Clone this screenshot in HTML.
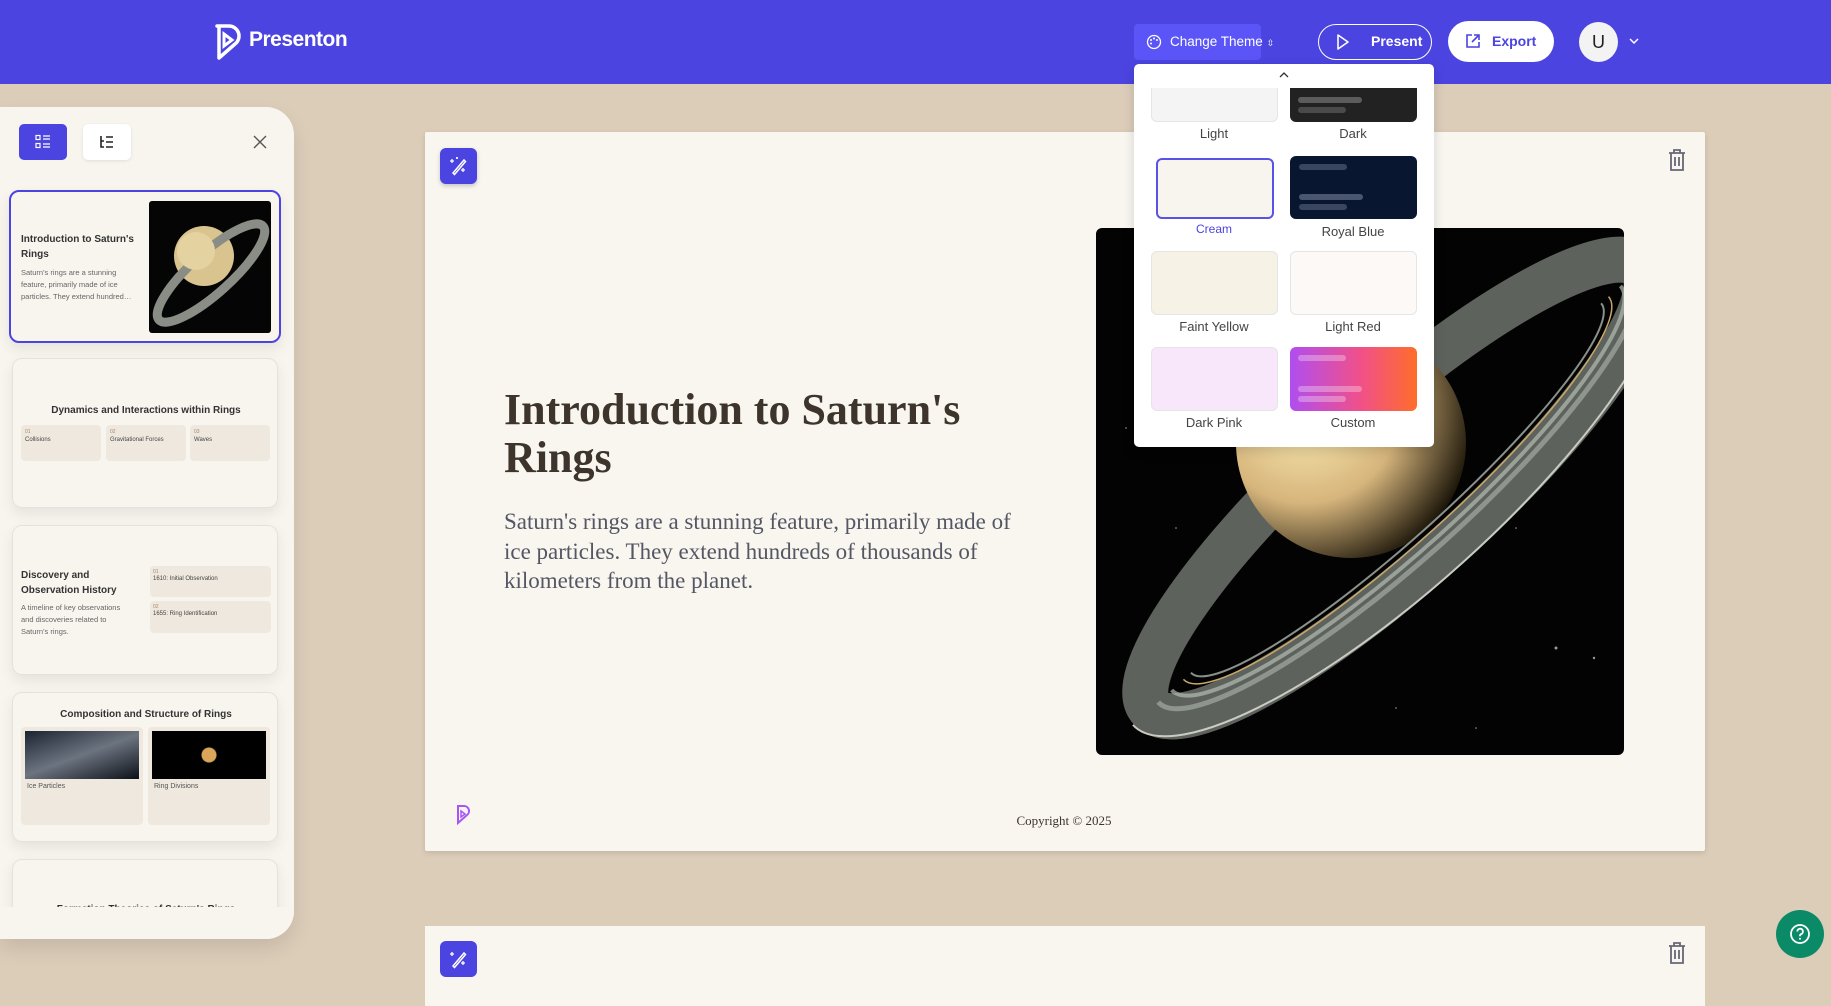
<!DOCTYPE html>
<html><head><meta charset="utf-8"><style>
*{box-sizing:border-box;margin:0;padding:0}
body{width:1831px;height:981px;overflow:hidden;background:#dccdb9;font-family:"Liberation Sans",sans-serif;position:relative}
.hdr{position:absolute;left:0;top:0;width:1831px;height:84px;background:#4b44e0}
.abs{position:absolute}
.serif{font-family:"Liberation Serif",serif}
.card{position:absolute;background:#f8f5ef;border:1px solid #e4e2e0;border-radius:10px;box-shadow:0 6px 14px rgba(0,0,0,.08);overflow:hidden}
.box{position:absolute;background:#efe8de;border-radius:4px}
.sw{position:absolute;border-radius:6px;border:1px solid #e5e5e5}
.bar{position:absolute;height:6px;border-radius:3px}
.lbl{position:absolute;width:150px;text-align:center;font-size:13px;color:#444}
</style></head><body>
<div class="hdr"></div>
<svg class="abs" style="left:214px;top:24px" width="30" height="36" viewBox="0 0 30 36"><path d="M3 2h12a10 10 0 0 1 6 18L5 34V2z" fill="none" stroke="#fff" stroke-width="3.5" stroke-linejoin="round"/><path d="M10 10l8 6-8 6z" fill="none" stroke="#fff" stroke-width="3"/></svg>
<div class="abs" style="left:249px;top:28px;font-size:21px;font-weight:bold;color:#fff;letter-spacing:-.5px">Presenton</div>
<div class="abs" style="left:1134px;top:24px;width:127px;height:36px;background:#5b55f7;border-radius:4px;color:#fff;font-size:13.5px;line-height:36px;padding-left:36px;white-space:nowrap">Change Theme <span style="font-size:9px">⇳</span></div>
<svg class="abs" style="left:1146px;top:34px" width="16" height="16" viewBox="0 0 16 16"><circle cx="8" cy="8" r="6.5" fill="none" stroke="#fff" stroke-width="1.3"/><circle cx="5" cy="6" r="1" fill="#fff"/><circle cx="8" cy="4.5" r="1" fill="#fff"/><circle cx="11" cy="6" r="1" fill="#fff"/><circle cx="5" cy="9.5" r="1" fill="#fff"/></svg>
<div class="abs" style="left:1318px;top:24px;width:114px;height:36px;border:1.5px solid #fff;border-radius:18px;color:#fff;font-size:14px;font-weight:bold;line-height:33px;padding-left:52px">Present</div>
<svg class="abs" style="left:1336px;top:33px" width="14" height="18" viewBox="0 0 14 18"><path d="M2 2l10 7-10 7z" fill="none" stroke="#fff" stroke-width="1.6" stroke-linejoin="round"/></svg>
<div class="abs" style="left:1448px;top:21px;width:106px;height:41px;background:#fff;border-radius:21px;color:#4b44e0;font-size:14px;font-weight:bold;line-height:41px;padding-left:44px">Export</div>
<svg class="abs" style="left:1465px;top:33px" width="16" height="16" viewBox="0 0 16 16"><path d="M7 2H2v12h12V9M9 2h5v5M14 2L7 9" fill="none" stroke="#4b44e0" stroke-width="1.6"/></svg>
<div class="abs" style="left:1579px;top:22px;width:39px;height:40px;background:#f3f3f3;border-radius:50%;text-align:center;line-height:40px;font-size:18px;color:#222">U</div>
<svg class="abs" style="left:1628px;top:36px" width="12" height="10" viewBox="0 0 12 10"><path d="M2 3l4 4 4-4" fill="none" stroke="#fff" stroke-width="1.5"/></svg>

<div class="abs" style="left:0;top:107px;width:294px;height:832px;background:#f8f5ef;border-radius:0 28px 28px 0;box-shadow:0 10px 20px rgba(0,0,0,.1);overflow:hidden">
 <div class="abs" style="left:19px;top:17px;width:48px;height:36px;background:#4b44e0;border-radius:5px"></div>
 <svg class="abs" style="left:35px;top:27px" width="16" height="16" viewBox="0 0 16 16"><rect x="1" y="1.5" width="4" height="4" fill="none" stroke="#fff" stroke-width="1.2"/><rect x="1" y="9.5" width="4" height="4" fill="none" stroke="#fff" stroke-width="1.2"/><path d="M8 2h7M8 5h7M8 10h7M8 13h7" stroke="#fff" stroke-width="1.2"/></svg>
 <div class="abs" style="left:83px;top:17px;width:48px;height:36px;background:#fff;border-radius:5px;box-shadow:0 1px 3px rgba(0,0,0,.1)"></div>
 <svg class="abs" style="left:99px;top:27px" width="16" height="16" viewBox="0 0 16 16"><path d="M2 2v11h3M2 7h3M7 3h7M7 8h7M7 13h7" fill="none" stroke="#222" stroke-width="1.6"/></svg>
 <svg class="abs" style="left:253px;top:28px" width="14" height="14" viewBox="0 0 14 14"><path d="M1 1l12 12M13 1L1 13" stroke="#555" stroke-width="1.4"/></svg>

 <div class="card" style="left:9px;top:83px;width:272px;height:153px;border:2px solid #4b44e0">
  <div class="abs" style="left:10px;top:40px;width:120px;font-size:10px;font-weight:bold;color:#333;line-height:15px">Introduction to Saturn's Rings</div>
  <div class="abs" style="left:10px;top:75px;width:120px;font-size:7.5px;color:#666;line-height:12px">Saturn's rings are a stunning feature, primarily made of ice particles. They extend hundred…</div>
  <svg class="abs" style="left:138px;top:9px;border-radius:3px" width="122" height="132" viewBox="0 0 122 132"><rect width="122" height="132" fill="#050505"/><circle cx="55" cy="55" r="30" fill="#d9c48f"/><g transform="rotate(-42 62 72)"><ellipse cx="62" cy="72" rx="70" ry="20" fill="none" stroke="#8a8d86" stroke-width="9"/></g><circle cx="47" cy="50" r="19" fill="#e4d3a0"/></svg>
 </div>

 <div class="card" style="left:12px;top:251px;width:266px;height:150px">
  <div class="abs" style="left:0;top:46px;width:266px;text-align:center;font-size:10px;font-weight:bold;color:#333">Dynamics and Interactions within Rings</div>
  <div class="box" style="left:8px;top:66px;width:80px;height:36px"><div style="font-size:5px;color:#a86;padding:4px 4px 0">01</div><div style="font-size:6px;color:#444;padding:2px 4px">Collisions</div></div>
  <div class="box" style="left:93px;top:66px;width:80px;height:36px"><div style="font-size:5px;color:#a86;padding:4px 4px 0">02</div><div style="font-size:6px;color:#444;padding:2px 4px">Gravitational Forces</div></div>
  <div class="box" style="left:177px;top:66px;width:80px;height:36px"><div style="font-size:5px;color:#a86;padding:4px 4px 0">03</div><div style="font-size:6px;color:#444;padding:2px 4px">Waves</div></div>
 </div>

 <div class="card" style="left:12px;top:418px;width:266px;height:150px">
  <div class="abs" style="left:8px;top:42px;width:110px;font-size:10px;font-weight:bold;color:#333;line-height:15px">Discovery and Observation History</div>
  <div class="abs" style="left:8px;top:76px;width:110px;font-size:7.5px;color:#666;line-height:12px">A timeline of key observations and discoveries related to Saturn's rings.</div>
  <div class="box" style="left:137px;top:40px;width:121px;height:31px"><div style="font-size:5px;color:#a86;padding:3px 3px 0">01</div><div style="font-size:6px;color:#444;padding:1px 3px">1610: Initial Observation</div></div>
  <div class="box" style="left:137px;top:75px;width:121px;height:32px"><div style="font-size:5px;color:#a86;padding:3px 3px 0">02</div><div style="font-size:6px;color:#444;padding:1px 3px">1655: Ring Identification</div></div>
 </div>

 <div class="card" style="left:12px;top:585px;width:266px;height:150px">
  <div class="abs" style="left:0;top:16px;width:266px;text-align:center;font-size:10px;font-weight:bold;color:#333">Composition and Structure of Rings</div>
  <div class="box" style="left:8px;top:34px;width:122px;height:98px"><div style="margin:4px;height:48px;background:linear-gradient(160deg,#1a2430,#6c7480 50%,#0c1018)"></div><div style="font-size:7px;color:#555;padding:0 6px">Ice Particles</div></div>
  <div class="box" style="left:135px;top:34px;width:122px;height:98px"><div style="margin:4px;height:48px;background:radial-gradient(circle at 50% 50%,#d9a65a 7px,#000 8px)"></div><div style="font-size:7px;color:#555;padding:0 6px">Ring Divisions</div></div>
 </div>

 <div class="card" style="left:12px;top:752px;width:266px;height:150px">
  <div class="abs" style="left:0;top:44px;width:266px;text-align:center;font-size:10px;font-weight:bold;color:#333">Formation Theories of Saturn's Rings</div>
 </div>
 <div class="abs" style="left:0;top:800px;width:294px;height:32px;background:#f8f5ef"></div>
</div>

<div class="abs" style="left:425px;top:132px;width:1280px;height:719px;background:#f9f6f0;box-shadow:0 2px 6px rgba(0,0,0,.12);border-radius:2px"></div>
<div class="abs" style="left:440px;top:148px;width:37px;height:36px;background:#4b44e0;border-radius:6px;box-shadow:0 2px 4px rgba(0,0,0,.2)"></div>
<svg class="abs" style="left:448px;top:156px" width="20" height="20" viewBox="0 0 20 20"><path d="M5 17L16 4l1.5 1.5L6.5 18.5z" fill="none" stroke="#fff" stroke-width="1.5"/><path d="M4 3v4M2 5h4M15 12v4M13 14h4M9 1v2M8 2h2" stroke="#fff" stroke-width="1.3"/></svg>
<svg class="abs" style="left:1667px;top:148px" width="20" height="24" viewBox="0 0 20 24"><path d="M2 5h16M7 5V2h6v3M4 5v17h12V5M8 9v9M12 9v9" fill="none" stroke="#667" stroke-width="1.8"/></svg>
<div class="abs serif" style="left:504px;top:386px;width:480px;font-size:44px;font-weight:bold;line-height:48px;color:#3d342c">Introduction to Saturn's Rings</div>
<div class="abs serif" style="left:504px;top:507px;width:510px;font-size:23px;line-height:29.5px;color:#545763">Saturn's rings are a stunning feature, primarily made of ice particles. They extend hundreds of thousands of kilometers from the planet.</div>
<svg class="abs" style="left:1096px;top:228px;border-radius:6px" width="528" height="527" viewBox="0 0 528 527">
 <defs><radialGradient id="pl" cx="30%" cy="35%" r="75%"><stop offset="0" stop-color="#fff1b8"/><stop offset=".55" stop-color="#d6b57c"/><stop offset="1" stop-color="#1a1408"/></radialGradient></defs>
 <rect width="528" height="527" fill="#030303"/>
 <g fill="#fff" opacity=".6"><circle cx="40" cy="60" r="1"/><circle cx="120" cy="30" r=".8"/><circle cx="460" cy="420" r="1.5"/><circle cx="498" cy="430" r="1.2"/><circle cx="300" cy="480" r=".8"/><circle cx="80" cy="300" r=".8"/><circle cx="420" cy="300" r=".8"/><circle cx="200" cy="80" r=".8"/><circle cx="30" cy="200" r=".8"/><circle cx="380" cy="500" r=".8"/></g>
 <g transform="rotate(-42 300 260)">
  <ellipse cx="300" cy="260" rx="330" ry="78" fill="none" stroke="#5e625c" stroke-width="46"/>
 </g>
 <circle cx="255" cy="215" r="115" fill="url(#pl)"/>
 <g transform="rotate(-42 300 260)">
  <path d="M-30 260a330 78 0 0 0 660 0" fill="none" stroke="#5e625c" stroke-width="46"/>
  <path d="M-20 260a320 72 0 0 0 640 0" fill="none" stroke="#9aa39c" stroke-width="5" opacity=".8"/>
  <path d="M-2 260a302 64 0 0 0 604 0" fill="none" stroke="#b4bcb4" stroke-width="4" opacity=".7"/>
  <path d="M-54 260a354 100 0 0 0 708 0" fill="none" stroke="#c8ccc2" stroke-width="2"/>
  <path d="M14 260a286 56 0 0 0 572 0" fill="none" stroke="#c9a86a" stroke-width="1.5"/>
  <path d="M24 260a276 50 0 0 0 552 0" fill="none" stroke="#8a908a" stroke-width="2"/>
 </g>
</svg>
<svg class="abs" style="left:456px;top:805px" width="16" height="20" viewBox="0 0 16 20"><path d="M2 1h6a5 5 0 0 1 3 9L2 18V1z" fill="none" stroke="#a855f7" stroke-width="2"/><path d="M5 6l4 3-4 3z" fill="none" stroke="#a855f7" stroke-width="1.5"/></svg>
<div class="abs serif" style="left:964px;top:813px;width:200px;text-align:center;font-size:13px;color:#3d342c">Copyright © 2025</div>

<div class="abs" style="left:425px;top:926px;width:1280px;height:80px;background:#f9f6f0"></div>
<div class="abs" style="left:440px;top:941px;width:37px;height:36px;background:#4b44e0;border-radius:6px"></div>
<svg class="abs" style="left:448px;top:949px" width="20" height="20" viewBox="0 0 20 20"><path d="M5 17L16 4l1.5 1.5L6.5 18.5z" fill="none" stroke="#fff" stroke-width="1.5"/><path d="M4 3v4M2 5h4M15 12v4M13 14h4" stroke="#fff" stroke-width="1.3"/></svg>
<svg class="abs" style="left:1667px;top:941px" width="20" height="24" viewBox="0 0 20 24"><path d="M2 5h16M7 5V2h6v3M4 5v17h12V5M8 9v9M12 9v9" fill="none" stroke="#667" stroke-width="1.8"/></svg>

<div class="abs" style="left:1776px;top:910px;width:48px;height:48px;border-radius:50%;background:#0b8a68"></div>
<svg class="abs" style="left:1789px;top:923px" width="22" height="22" viewBox="0 0 22 22"><circle cx="11" cy="11" r="9" fill="none" stroke="#fff" stroke-width="1.8"/><path d="M8.3 8.5a2.8 2.8 0 1 1 3.8 2.6c-.7.3-1.1.9-1.1 1.6v.6" fill="none" stroke="#fff" stroke-width="1.8"/><circle cx="11" cy="15.8" r="1" fill="#fff"/></svg>

<div class="abs" style="left:1134px;top:64px;width:300px;height:383px;background:#fff;border-radius:5px;box-shadow:0 4px 12px rgba(0,0,0,.15);overflow:hidden">
 <svg class="abs" style="left:144px;top:6px" width="12" height="10" viewBox="0 0 12 10"><path d="M2 7l4-4 4 4" fill="none" stroke="#333" stroke-width="1.3"/></svg>
 <div class="sw" style="left:17px;top:24px;width:127px;height:34px;background:#f4f4f4;border-radius:0 0 6px 6px;border-top:none"></div>
 <div class="sw" style="left:156px;top:24px;width:127px;height:34px;background:#222;border:none;border-radius:0 0 6px 6px"><div class="bar" style="left:8px;top:9px;width:64px;background:#5c5c5c"></div><div class="bar" style="left:8px;top:19px;width:48px;background:#4a4a4a"></div></div>
 <div class="lbl" style="left:5px;top:62px">Light</div>
 <div class="lbl" style="left:144px;top:62px">Dark</div>
 <div class="sw" style="left:22px;top:94px;width:118px;height:61px;background:#f8f5ee;border:2px solid #5a52e8"></div>
 <div class="sw" style="left:156px;top:92px;width:127px;height:63px;background:#08162f;border:none"><div class="bar" style="left:9px;top:8px;width:48px;background:#3a4560"></div><div class="bar" style="left:9px;top:38px;width:64px;background:#4a5570"></div><div class="bar" style="left:9px;top:48px;width:48px;background:#3a4560"></div></div>
 <div class="lbl" style="left:5px;top:158px;color:#4b44e0;font-size:12px">Cream</div>
 <div class="lbl" style="left:144px;top:160px">Royal Blue</div>
 <div class="sw" style="left:17px;top:187px;width:127px;height:64px;background:#f6f2e6"></div>
 <div class="sw" style="left:156px;top:187px;width:127px;height:64px;background:#fcf9f7"></div>
 <div class="lbl" style="left:5px;top:255px">Faint Yellow</div>
 <div class="lbl" style="left:144px;top:255px">Light Red</div>
 <div class="sw" style="left:17px;top:283px;width:127px;height:64px;background:#f8e6fb"></div>
 <div class="sw" style="left:156px;top:283px;width:127px;height:64px;border:none;background:linear-gradient(90deg,#b04ef0,#f0508a 55%,#ff6d2a)"><div class="bar" style="left:8px;top:8px;width:48px;background:rgba(255,255,255,.3)"></div><div class="bar" style="left:8px;top:39px;width:64px;background:rgba(255,255,255,.3)"></div><div class="bar" style="left:8px;top:49px;width:48px;background:rgba(255,255,255,.3)"></div></div>
 <div class="lbl" style="left:5px;top:351px">Dark Pink</div>
 <div class="lbl" style="left:144px;top:351px">Custom</div>
</div>
</body></html>
